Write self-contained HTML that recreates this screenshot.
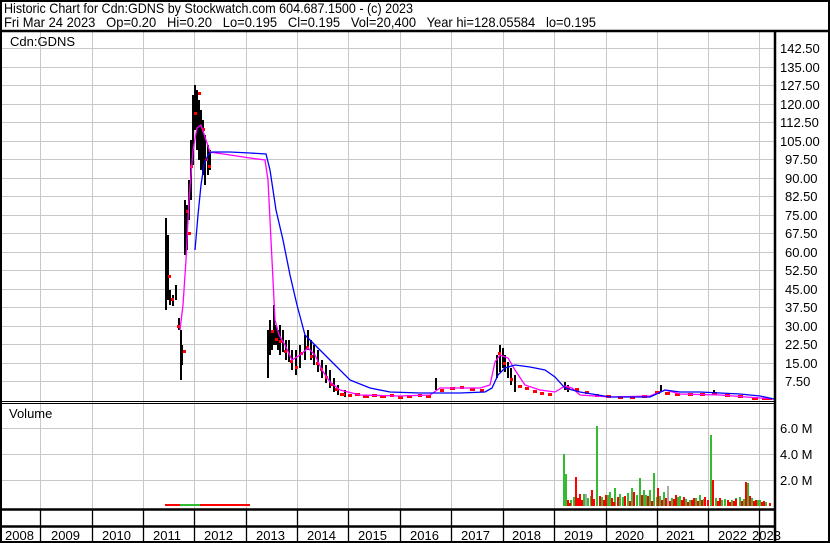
<!DOCTYPE html>
<html><head><meta charset="utf-8"><style>
html,body{margin:0;padding:0;background:#fff;width:830px;height:543px;overflow:hidden}
svg{display:block}
text{font-family:"Liberation Sans",Arial,sans-serif;fill:#000}
</style></head><body>
<svg width="830" height="543" viewBox="0 0 830 543" xmlns="http://www.w3.org/2000/svg">
<rect x="0" y="0" width="830" height="543" fill="#fff"/>
<text x="4" y="13" font-size="14" textLength="409" lengthAdjust="spacingAndGlyphs">Historic Chart for Cdn:GDNS by Stockwatch.com 604.687.1500 - (c) 2023</text>
<text x="4" y="27" font-size="14" textLength="592" lengthAdjust="spacingAndGlyphs" xml:space="preserve">Fri Mar 24 2023   Op=0.20   Hi=0.20   Lo=0.195   Cl=0.195   Vol=20,400   Year hi=128.05584   lo=0.195</text>
<g stroke="#c8c8c8" stroke-width="1">
<path d="M40.5 32V509M92.5 32V509M143.5 32V509M194.5 32V509M246.5 32V509M297.5 32V509M348.5 32V509M400.5 32V509M451.5 32V509M503.5 32V509M554.5 32V509M606.5 32V509M657.5 32V509M708.5 32V509M759.5 32V509"/>
<path d="M2 48.5H775M2 67.5H775M2 85.5H775M2 104.5H775M2 122.5H775M2 141.5H775M2 159.5H775M2 178.5H775M2 196.5H775M2 215.5H775M2 233.5H775M2 252.5H775M2 270.5H775M2 289.5H775M2 307.5H775M2 326.5H775M2 344.5H775M2 363.5H775M2 381.5H775"/>
<path d="M2 428.5H775M2 454.5H775M2 480.5H775"/>
</g>
<text x="10" y="46" font-size="13">Cdn:GDNS</text>
<text x="9" y="418" font-size="13">Volume</text>
<g font-size="13">
<text x="780" y="53">142.50</text><text x="780" y="72">135.00</text><text x="780" y="90">127.50</text><text x="780" y="109">120.00</text><text x="780" y="127">112.50</text><text x="780" y="146">105.00</text><text x="785" y="164">97.50</text><text x="785" y="183">90.00</text><text x="785" y="201">82.50</text><text x="785" y="220">75.00</text><text x="785" y="238">67.50</text><text x="785" y="257">60.00</text><text x="785" y="275">52.50</text><text x="785" y="294">45.00</text><text x="785" y="312">37.50</text><text x="785" y="331">30.00</text><text x="785" y="349">22.50</text><text x="785" y="368">15.00</text><text x="785" y="386">7.50</text>
<text x="780" y="433">6.0 M</text><text x="780" y="459">4.0 M</text><text x="780" y="485">2.0 M</text>
</g>
<!-- price bars -->
<g stroke="#000" stroke-width="2" fill="none">
<path d="M166 218V310M168 235V300M170 290V305M173 295V306M176 285V300M179 318V330M181 330V380M182 345V365M185 200V255M187 205V250M189 180V220M191 140V200M193 95V165M195 85V130M197 90V150M199 100V160M201 110V170M203 120V175M205 135V185M208 145V175M210 150V170"/>
<path d="M268 330V378M270 320V355M272 330V350M274 305V345M276 325V345M278 330V350M280 325V355M283 330V352M286 340V360M289 340V362M292 350V370M296 350V375M300 345V368M305 335V360M308 330V350M311 340V360M314 345V365M318 350V372M322 360V378M326 365V383M330 370V388M334 378V392M338 385V395M345 390V397"/>
<path d="M436 378V390M497 355V378M500 345V372M503 348V368M505 355V372M508 362V378M511 368V385M515 375V392"/>
<path d="M565 382V390M568 385V392M661 385V392M714 390V395"/>
</g>
<g fill="#f00">
<rect x="177" y="325" width="3" height="3"/><rect x="183" y="350" width="3" height="3"/><rect x="188" y="232" width="3" height="3"/><rect x="190" y="165" width="3" height="3"/><rect x="194" y="112" width="3" height="3"/><rect x="198" y="92" width="3" height="3"/><rect x="202" y="128" width="3" height="3"/><rect x="205" y="158" width="3" height="3"/><rect x="208" y="165" width="3" height="3"/><rect x="171" y="298" width="3" height="3"/><rect x="168" y="275" width="3" height="3"/><rect x="186" y="210" width="3" height="3"/>
<rect x="271" y="330" width="3" height="3"/><rect x="275" y="338" width="3" height="3"/><rect x="279" y="340" width="3" height="3"/><rect x="284" y="350" width="3" height="3"/><rect x="290" y="360" width="3" height="3"/><rect x="295" y="366" width="3" height="3"/><rect x="300" y="352" width="3" height="3"/><rect x="306" y="346" width="3" height="3"/><rect x="310" y="355" width="3" height="3"/><rect x="316" y="362" width="3" height="3"/><rect x="320" y="368" width="3" height="3"/><rect x="325" y="376" width="3" height="3"/><rect x="330" y="383" width="3" height="3"/><rect x="335" y="388" width="3" height="3"/>
<rect x="340" y="393" width="5" height="3"/><rect x="348" y="394" width="4" height="3"/><rect x="355" y="393" width="5" height="3"/><rect x="363" y="395" width="6" height="3"/><rect x="372" y="394" width="5" height="3"/><rect x="380" y="395" width="6" height="3"/><rect x="390" y="394" width="4" height="3"/><rect x="398" y="396" width="5" height="3"/><rect x="407" y="395" width="5" height="3"/><rect x="418" y="394" width="4" height="3"/><rect x="426" y="395" width="5" height="3"/><rect x="440" y="389" width="4" height="3"/><rect x="450" y="387" width="5" height="3"/><rect x="460" y="386" width="4" height="3"/><rect x="470" y="388" width="5" height="3"/><rect x="480" y="389" width="4" height="3"/>
<rect x="498" y="352" width="3" height="3"/><rect x="503" y="362" width="3" height="3"/><rect x="510" y="378" width="3" height="3"/><rect x="518" y="385" width="4" height="3"/><rect x="525" y="387" width="4" height="3"/><rect x="533" y="390" width="4" height="3"/><rect x="540" y="392" width="4" height="3"/><rect x="548" y="393" width="4" height="3"/>
<rect x="566" y="387" width="4" height="3"/><rect x="575" y="388" width="4" height="3"/><rect x="585" y="391" width="4" height="3"/><rect x="595" y="394" width="4" height="3"/><rect x="606" y="395" width="5" height="3"/><rect x="618" y="396" width="5" height="3"/><rect x="630" y="396" width="5" height="3"/><rect x="642" y="395" width="5" height="3"/><rect x="655" y="391" width="5" height="3"/><rect x="665" y="392" width="5" height="3"/><rect x="675" y="393" width="5" height="3"/><rect x="688" y="393" width="5" height="3"/><rect x="700" y="393" width="5" height="3"/><rect x="712" y="392" width="5" height="3"/><rect x="725" y="394" width="5" height="3"/><rect x="738" y="395" width="5" height="3"/><rect x="752" y="397" width="6" height="3"/><rect x="762" y="398" width="10" height="2"/>
</g>
<polyline fill="none" stroke="#f0f" stroke-width="1.3" points="180,330 183,305 186,260 189,200 193,150 197,128 201,125 206,140 210,152 230,155 250,158 265,160 268,180 272,260 275,320 279,335 285,345 292,360 300,355 308,348 315,355 322,370 330,382 340,390 360,395 400,396 430,395 440,388 480,388 490,385 495,362 500,355 508,358 515,370 525,385 540,390 555,392 565,386 572,388 580,395 610,397 650,396 665,390 680,394 720,395 760,398 774,399"/>
<polyline fill="none" stroke="#00f" stroke-width="1.3" points="195,250 198,215 201,185 204,165 208,155 212,152 230,152 250,153 266,154 270,170 276,210 283,240 290,275 297,305 305,335 315,345 325,355 335,365 350,380 370,388 390,392 420,393 460,393 485,392 492,388 498,375 505,368 515,365 530,367 545,370 555,377 565,388 580,392 610,397 650,397 665,390 680,392 700,392 720,393 740,394 760,396 774,399"/>
<!-- volume -->
<rect x="165" y="504" width="85" height="2" fill="#f00"/>
<rect x="180" y="504" width="20" height="2" fill="#3b3"/>
<g stroke-width="2">
<path stroke="#33bb33" d="M564 506V454M566 506V474M571 506V500M574 506V497M584 506V494M588 506V498M591 506V496M597 506V426M602 506V497M608 506V495M610 506V492M615 506V488M620 506V494M623 506V497M628 506V493M632 506V488M637 506V495M640 506V478M644 506V490M646 506V495M650 506V490M654 506V473M657 506V497M660 506V496M664 506V492M668 506V494M672 506V498M678 506V497M680 506V496M686 506V499M690 506V500M696 506V498M700 506V495M704 506V499M711 506V435M716 506V498M722 506V500M725 506V499M732 506V500M736 506V498M740 506V497M744 506V499M748 506V483M752 506V498M758 506V500M760 506V500M766 506V502"/>
<path stroke="#ff0000" d="M568 506V500M570 506V503M576 506V477M578 506V498M580 506V494M582 506V500M592 506V490M594 506V499M600 506V496M604 506V500M606 506V495M612 506V498M614 506V502M618 506V497M625 506V496M630 506V501M634 506V492M642 506V495M648 506V496M652 506V501M658 506V488M662 506V500M666 506V498M670 506V501M674 506V499M676 506V495M682 506V500M684 506V497M688 506V502M692 506V500M694 506V498M698 506V501M702 506V500M705 506V497M708 506V500M713 506V480M718 506V501M720 506V498M728 506V500M730 506V502M734 506V501M736 506V499M742 506V501M746 506V482M750 506V496M754 506V501M756 506V500M762 506V502M764 506V501M770 506V503"/>
<path stroke="#aaa" d="M586 506V494M668 506V486"/>
</g>
<g stroke="#000" fill="none">
<path d="M0 31H830" stroke-width="2.5"/>
<path d="M2 401.5H775M2 403.5H775" stroke-width="1"/>
<path d="M775 31V543" stroke-width="2.5"/>
<path d="M0 509.5H775" stroke-width="2.5"/>
<path d="M0 526.5H775" stroke-width="2.5"/>
<path d="M40.5 510V526M92.5 510V526M143.5 510V526M194.5 510V526M246.5 510V526M297.5 510V526M348.5 510V526M400.5 510V526M451.5 510V526M503.5 510V526M554.5 510V526M606.5 510V526M657.5 510V526M708.5 510V526M759.5 510V526" stroke-width="1.3"/>
<path d="M40.5 527V542M92.5 527V542M143.5 527V542M194.5 527V542M246.5 527V542M297.5 527V542M348.5 527V542M400.5 527V542M451.5 527V542M503.5 527V542M554.5 527V542M606.5 527V542M657.5 527V542M708.5 527V542M759.5 527V542" stroke-width="1.3"/>
<rect x="1" y="1" width="828" height="541" stroke-width="2"/>
</g>
<g font-size="13">
<text x="5" y="540">2008</text><text x="51" y="540">2009</text><text x="102" y="540">2010</text><text x="153" y="540">2011</text><text x="204" y="540">2012</text><text x="256" y="540">2013</text><text x="307" y="540">2014</text><text x="358" y="540">2015</text><text x="410" y="540">2016</text><text x="461" y="540">2017</text><text x="512" y="540">2018</text><text x="564" y="540">2019</text><text x="615" y="540">2020</text><text x="666" y="540">2021</text><text x="718" y="540">2022</text><text x="752" y="540">2023</text>
</g>
</svg>
</body></html>
